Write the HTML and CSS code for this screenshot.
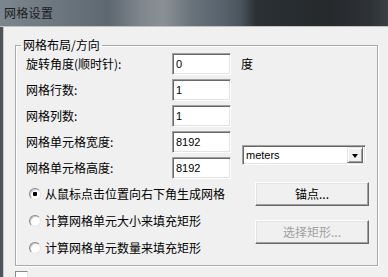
FILE: index.html
```html
<!DOCTYPE html>
<html lang="zh-CN">
<head>
<meta charset="utf-8">
<link rel="stylesheet" href="styles.css">
</head>
<body>
<div class="window">
  <div class="titlebar"><span class="title">网格设置</span></div>
  <div class="frame">
    <div class="edge"></div>
    <div class="client">
      <fieldset class="group">
        <legend class="legend">网格布局/方向</legend>
        <div class="fields">
          <span class="lbl">旋转角度(顺时针):</span><span class="input">0</span><span class="unit">度</span>
          <span class="lbl">网格行数:</span><span class="input">1</span>
          <span class="lbl">网格列数:</span><span class="input">1</span>
          <span class="lbl">网格单元格宽度:</span><span class="input">8192</span>
          <span class="lbl">网格单元格高度:</span><span class="input">8192</span>
          <span class="combo"><span class="combo-text">meters</span><span class="combo-btn"><span class="arrow"></span></span></span>
        </div>
        <div class="options">
          <span class="opt"><span class="radio checked"></span>从鼠标点击位置向右下角生成网格</span>
          <span class="btn anchor">锚点...</span>
          <span class="opt"><span class="radio"></span>计算网格单元大小来填充矩形</span>
          <span class="btn pick disabled">选择矩形...</span>
          <span class="opt"><span class="radio"></span>计算网格单元数量来填充矩形</span>
        </div>
      </fieldset>
      <div class="check"></div>
    </div>
  </div>
</div>
</body>
</html>
```

FILE: styles.css
```css
html, body {
  margin: 0;
  padding: 0;
}
body {
  width: 388px;
  height: 277px;
  overflow: hidden;
  font-family: "Noto Sans CJK SC", "Noto Sans", sans-serif;
  font-size: 12px;
  color: #000;
  background: #f0f0f0;
}
.window {
  display: flex;
  flex-direction: column;
  height: 277px;
}
.titlebar {
  height: 26px;
  flex: none;
  display: flex;
  align-items: center;
  padding-left: 4px;
  border-bottom: 1px solid #c2c2c2;
  background: linear-gradient(90deg, #7c868f 0%, #6c7780 14%, #5d6871 28%, #7e858c 36%, #8a9096 42%, #67717a 50%, #56616b 58%, #4a545d 62%, #2b3034 66%, #25292c 85%, #2e3236 95%, #3a3f43 100%);
}
.title {
  font-size: 12px;
  line-height: 14px;
  color: #1c1c1c;
  letter-spacing: 0.3px;
}
.frame {
  flex: 1;
  display: flex;
}
.edge {
  width: 3px;
  flex: none;
  background: #4b535b;
}
.client {
  flex: 1;
  border-left: 1px solid #c8c8c8;
  padding-left: 11px;
  padding-right: 10px;
}
.group {
  margin: 11px 0 0 0;
  padding: 1px 0 4px 0;
  border: 1px solid #a9a9a9;
  box-shadow: 1px 1px 0 #fff, inset 1px 1px 0 #fff;
  min-width: 0;
}
.legend {
  margin-left: 5px;
  padding: 0 2px;
  font-size: 12px;
  line-height: 14px;
}
.fields {
  display: grid;
  grid-template-columns: 136px 59px 1fr;
  grid-auto-rows: 22px;
  column-gap: 10px;
  row-gap: 4px;
  padding-left: 10px;
  align-items: center;
}
.lbl {
  grid-column: 1;
  line-height: 14px;
}
.input {
  grid-column: 2;
  box-sizing: border-box;
  height: 22px;
  background: #fff;
  border: 1px solid;
  border-color: #a0a0a0 #fff #fff #a0a0a0;
  box-shadow: inset 1px 1px 0 #696969, inset -1px -1px 0 #e3e3e3;
  padding-left: 3px;
  font-family: "Liberation Sans", Arial, sans-serif;
  font-size: 11px;
  line-height: 20px;
}
.unit {
  grid-column: 3;
  line-height: 14px;
}
.combo {
  grid-column: 3;
  grid-row: 4 / span 2;
  box-sizing: border-box;
  width: 124px;
  height: 20px;
  margin-left: 1px;
  background: #fff;
  border: 1px solid;
  border-color: #a0a0a0 #fff #fff #a0a0a0;
  box-shadow: inset 1px 1px 0 #696969, inset -1px -1px 0 #e3e3e3;
  display: flex;
  align-items: center;
  padding: 2px;
}
.combo-text {
  flex: 1;
  font-family: "Liberation Sans", Arial, sans-serif;
  font-size: 11px;
  line-height: 14px;
  padding-left: 1px;
}
.combo-btn {
  box-sizing: border-box;
  width: 16px;
  height: 16px;
  background: #f0f0f0;
  border: 1px solid;
  border-color: #e3e3e3 #696969 #696969 #e3e3e3;
  box-shadow: inset 1px 1px 0 #fff, inset -1px -1px 0 #a0a0a0;
  display: flex;
  align-items: center;
  justify-content: center;
}
.arrow {
  width: 0;
  height: 0;
  border-left: 3.5px solid transparent;
  border-right: 3.5px solid transparent;
  border-top: 4px solid #000;
  margin-top: 1px;
}
.options {
  display: grid;
  grid-template-columns: 226px 114px;
  grid-template-rows: 27px 27px 27px;
  margin-top: 1px;
  padding-left: 13px;
}
.opt {
  grid-column: 1;
  display: flex;
  align-items: center;
  gap: 4px;
  line-height: 14px;
}
.radio {
  box-sizing: border-box;
  width: 12px;
  height: 12px;
  border-radius: 50%;
  border: 1px solid;
  border-color: #8a8a8a #e6e6e6 #e6e6e6 #8a8a8a;
  background: #fff;
  box-shadow: inset 1px 1px 0 #c8c8c8;
  flex: none;
}
.radio.checked {
  background: radial-gradient(circle at 50% 50%, #000 0, #000 2px, #fff 2.5px);
}
.btn {
  grid-column: 2;
  box-sizing: border-box;
  height: 24px;
  background: #f0f0f0;
  border: 1px solid;
  border-color: #fff #696969 #696969 #fff;
  box-shadow: inset -1px -1px 0 #a0a0a0, inset 1px 1px 0 #e3e3e3;
  display: flex;
  align-items: center;
  justify-content: center;
  line-height: 14px;
}
.anchor {
  grid-row: 1;
  align-self: center;
}
.pick {
  grid-row: 2 / span 2;
  align-self: start;
  margin-top: 13px;
}
.disabled {
  color: #a0a0a0;
}
.check {
  width: 13px;
  height: 13px;
  box-sizing: border-box;
  margin-top: 5px;
  background: #fff;
  border: 1px solid;
  border-color: #8a8a8a #e6e6e6 #e6e6e6 #8a8a8a;
}
```
